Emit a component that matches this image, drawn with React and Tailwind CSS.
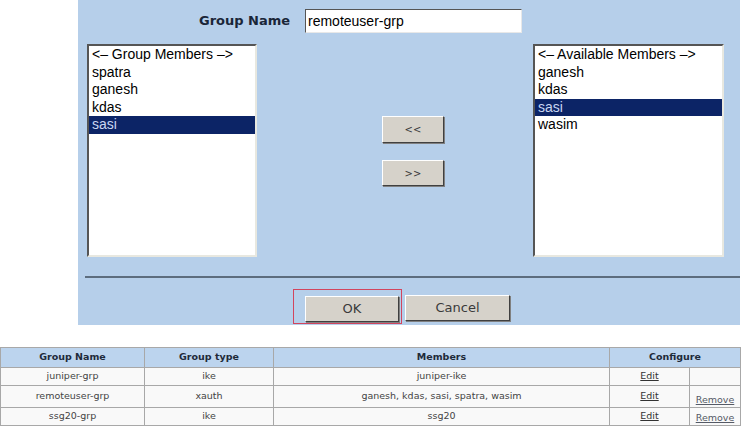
import React from "react";

const groupMembers = ["spatra", "ganesh", "kdas", "sasi"];
const availableMembers = ["ganesh", "kdas", "sasi", "wasim"];

const groups = [
  { name: "juniper-grp", type: "ike", members: "juniper-ike", removable: false },
  { name: "remoteuser-grp", type: "xauth", members: "ganesh, kdas, sasi, spatra, wasim", removable: true, tall: true },
  { name: "ssg20-grp", type: "ike", members: "ssg20", removable: true },
];

const ListBox = ({ title, items, selected, className }) => (
  <div
    className={`bg-white border-2 border-t-[#555] border-l-[#555] border-r-[#e8e8e0] border-b-[#e8e8e0] font-['Liberation_Sans',sans-serif] text-[14px] leading-[17.6px] text-black ${className}`}
  >
    <div className="px-[3px]">{title}</div>
    {items.map((item) => (
      <div
        key={item}
        className={`px-[3px] ${item === selected ? "bg-[#0c2466] text-[#c9d6f2]" : ""}`}
      >
        {item}
      </div>
    ))}
  </div>
);

const WinButton = ({ children, className }) => (
  <button
    className={`bg-[#d6d2ca] border border-t-white border-l-white border-r-[#404040] border-b-[#404040] shadow-[1px_1px_0_#808080] font-['DejaVu_Sans',sans-serif] text-[#3a3a3a] ${className}`}
  >
    {children}
  </button>
);

export default function App() {
  return (
    <div className="w-[751px] h-[428px] bg-white overflow-hidden">
      {/* Edit panel */}
      <div className="ml-[78px] w-[662px] h-[325px] bg-[#b6cfea] flex flex-col">
        <div className="flex items-center h-[24px] mt-[9px]">
          <span className="ml-[121px] w-[96px] font-['DejaVu_Sans',sans-serif] font-bold text-[13px] text-[#1a2638]">
            Group Name
          </span>
          <div className="ml-[10px] w-[217px] h-[24px] bg-white border border-t-[#555] border-l-[#555] border-r-[#e8e8e8] border-b-[#e8e8e8] flex items-center px-[2px] font-['Liberation_Sans',sans-serif] text-[14px] text-black">
            remoteuser-grp
          </div>
        </div>

        <div className="flex mt-[11px] h-[213px]">
          <ListBox
            title="<– Group Members –>"
            items={groupMembers}
            selected="sasi"
            className="ml-[9px] w-[170px] h-[213px]"
          />
          <div className="ml-[125px] w-[62px] flex flex-col pt-[72px] gap-[17px]">
            <WinButton className="w-[62px] h-[27px] text-[10px]">&lt;&lt;</WinButton>
            <WinButton className="w-[62px] h-[26px] text-[10px]">&gt;&gt;</WinButton>
          </div>
          <ListBox
            title="<– Available Members –>"
            items={availableMembers}
            selected="sasi"
            className="ml-[89px] w-[191px] h-[213px]"
          />
        </div>

        <div className="ml-[7px] mt-[19px] h-[2px] bg-[#5d6d7e]" />

        <div className="flex mt-[11px]">
          {/* highlighted OK box */}
          <div className="ml-[215px] w-[109px] h-[35px] border border-solid border-[#d2455e] pl-[11px] pt-[5px]">
            <WinButton className="w-[94px] h-[26px] text-[13px]">OK</WinButton>
          </div>
          <WinButton className="ml-[3px] mt-[6px] w-[105px] h-[26px] text-[13px]">Cancel</WinButton>
        </div>
      </div>

      {/* Group list */}
      <table className="mt-[22px] w-[740px] border-collapse table-fixed font-['DejaVu_Sans',sans-serif] text-[9.5px] text-[#444]">
        <colgroup>
          <col className="w-[144px]" />
          <col className="w-[129px]" />
          <col className="w-[336px]" />
          <col className="w-[80px]" />
          <col className="w-[51px]" />
        </colgroup>
        <thead>
          <tr className="h-[20px] bg-[#bcd4ee] text-[#1e2a3a]">
            <th className="border border-[#a8a8a8] font-bold">Group Name</th>
            <th className="border border-[#a8a8a8] font-bold">Group type</th>
            <th className="border border-[#a8a8a8] font-bold">Members</th>
            <th colSpan={2} className="border border-[#a8a8a8] font-bold">Configure</th>
          </tr>
        </thead>
        <tbody>
          {groups.map((g) => (
            <tr key={g.name} className={`bg-[#f9f9f9] ${g.tall ? "h-[22px]" : "h-[18px]"}`}>
              <td className="border border-[#a8a8a8] text-center">{g.name}</td>
              <td className="border border-[#a8a8a8] text-center">{g.type}</td>
              <td className="border border-[#a8a8a8] text-center">{g.members}</td>
              <td className="border border-[#a8a8a8] text-center">
                <span className="underline text-[#333]">Edit</span>
              </td>
              <td className="border border-[#a8a8a8] text-center align-bottom">
                {g.removable && <span className="underline text-[#555a66]">Remove</span>}
              </td>
            </tr>
          ))}
        </tbody>
      </table>
    </div>
  );
}
